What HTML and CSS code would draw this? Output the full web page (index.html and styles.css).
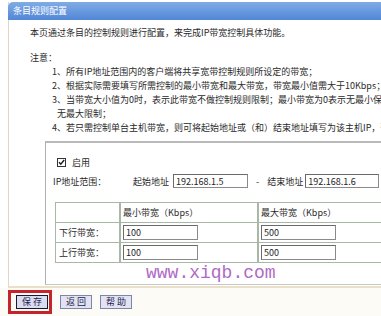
FILE: index.html
```html
<!DOCTYPE html>
<html>
<head>
<meta charset="utf-8">
<link rel="stylesheet" href="styles.css">
</head>
<body>
<div class="page">
  <div class="panel">
    <div class="hdr">条目规则配置</div>
    <div class="content">
      <p class="intro">本页通过条目的控制规则进行配置，来完成IP带宽控制具体功能。</p>
      <p class="note">注意：</p>
      <ul class="list">
        <li>1、所有IP地址范围内的客户端将共享宽带控制规则所设定的带宽；</li>
        <li>2、根据实际需要填写所需控制的最小带宽和最大带宽，带宽最小值需大于10Kbps；</li>
        <li>3、当带宽大小值为0时，表示此带宽不做控制规则限制；最小带宽为0表示无最小保障，最大带宽为0表示</li>
        <li class="cont">无最大限制；</li>
        <li>4、若只需控制单台主机带宽，则可将起始地址或（和）结束地址填写为该主机IP，否则请留空。</li>
      </ul>
      <div class="box">
        <div class="chk-row">
          <span class="chk"><svg width="7" height="7" viewBox="0 0 7 7"><path d="M1 3.2 L2.8 5.2 L6.2 1" fill="none" stroke="#222" stroke-width="1.5"/></svg></span>
          <span>启用</span>
        </div>
        <div class="ip-row">
          <span class="ip-label">IP地址范围：</span>
          <span>起始地址</span>
          <input class="field ip-start" value="192.168.1.5">
          <span class="dash">-</span>
          <span>结束地址</span>
          <input class="field ip-end" value="192.168.1.6">
        </div>
        <table class="bw">
          <tr>
            <td class="c1"></td>
            <td class="c2">最小带宽（Kbps）</td>
            <td class="c3">最大带宽（Kbps）</td>
          </tr>
          <tr>
            <td class="c1">下行带宽：</td>
            <td class="c2"><input class="field num" value="100"></td>
            <td class="c3"><input class="field num" value="500"></td>
          </tr>
          <tr>
            <td class="c1">上行带宽：</td>
            <td class="c2"><input class="field num" value="100"></td>
            <td class="c3"><input class="field num" value="500"></td>
          </tr>
        </table>
        <div class="wm">www.xiqb.com</div>
      </div>
    </div>
  </div>
  <div class="btns">
    <span class="hl"><span class="btn primary">保 存</span></span>
    <span class="btn">返 回</span>
    <span class="btn">帮 助</span>
  </div>
</div>
</body>
</html>
```
FILE: styles.css
```css
html, body {
  margin: 0;
  padding: 0;
  background: #ffffff;
  overflow: hidden;
}
body {
  font-family: "Noto Sans CJK SC", "Liberation Sans", sans-serif;
  font-size: 9px;
  color: #2a2a2a;
}
.page {
  width: 470px;
  padding-top: 2px;
}
.panel {
  margin-left: 8px;
  border-left: 1px solid #e2d7c2;
  border-bottom: 2px solid #eadfc9;
}
.hdr {
  height: 18px;
  line-height: 18px;
  margin-left: -1px;
  padding-left: 5px;
  color: #ffffff;
  background: linear-gradient(#80abe6, #5287d6);
  border-top-left-radius: 5px;
}
.content {
  padding: 6px 0 1px 21px;
  background: #ffffff;
}
.intro, .note {
  margin: 0;
  line-height: 14px;
  white-space: nowrap;
}
.note {
  margin-top: 11px;
}
.list {
  list-style: none;
  margin: 0;
  padding: 0 0 0 22px;
  line-height: 14px;
  white-space: nowrap;
}
.list .cont {
  padding-left: 5px;
}
.box {
  margin: 6px 0 0 15px;
  border-top: 2px solid #b9b9b9;
  border-left: 1px solid #b0b0b0;
  border-bottom: 1px solid #c8c8c8;
  padding: 12px 0 0 7px;
}
.chk-row {
  display: flex;
  align-items: center;
  gap: 6px;
  height: 14px;
  padding-left: 4px;
}
.chk {
  width: 7px;
  height: 7px;
  border: 1px solid #333;
  background: #fff;
  display: flex;
}
.ip-row {
  display: flex;
  align-items: center;
  height: 16px;
  margin-top: 4px;
  white-space: nowrap;
}
.ip-label {
  width: 80px;
}
.field {
  box-sizing: border-box;
  height: 14px;
  border: 1px solid #8a8a8a;
  border-top-color: #6a6a6a;
  border-left-color: #6a6a6a;
  padding: 0 2px;
  font-family: "Noto Sans CJK SC", "Liberation Sans", sans-serif;
  font-size: 9px;
  color: #222;
  background: #fff;
  outline: none;
}
.ip-start {
  width: 75px;
  margin-left: 4px;
}
.dash {
  margin: 0 8px 0 8px;
}
.ip-end {
  width: 74px;
  margin-left: 2px;
}
.bw {
  margin: 13px 0 0 2px;
  border-collapse: collapse;
  width: 420px;
}
.bw td {
  height: 19px;
  padding: 0 0 0 2px;
  border: 1px solid #a9b8a6;
  border-width: 1px 2px 1px 1px;
  white-space: nowrap;
}
.bw .c1 {
  width: 60px;
  padding-left: 3px;
}
.bw .c2 {
  width: 134px;
}
.num {
  width: 75px;
  height: 15px;
  display: block;
}
.wm {
  height: 21px;
  line-height: 21px;
  padding-left: 93px;
  font-family: "Liberation Mono", monospace;
  font-size: 18px;
  color: #b06ac6;
}
.btns {
  display: flex;
  align-items: center;
  gap: 8px;
  padding: 0 0 0 8px;
  height: 28px;
  background: #fdfbf6;
}
.hl {
  border: 3px solid #c4252b;
  padding: 2px 1px 2px 5px;
  display: flex;
}
.btn {
  box-sizing: border-box;
  height: 14px;
  line-height: 12px;
  padding: 0 5px;
  border: 1px solid #7d86a8;
  background: #e2e2f2;
  color: #1e2350;
  white-space: nowrap;
}
.btn.primary {
  border-color: #1a1a2e;
  background: #dcdcf0;
}
```
